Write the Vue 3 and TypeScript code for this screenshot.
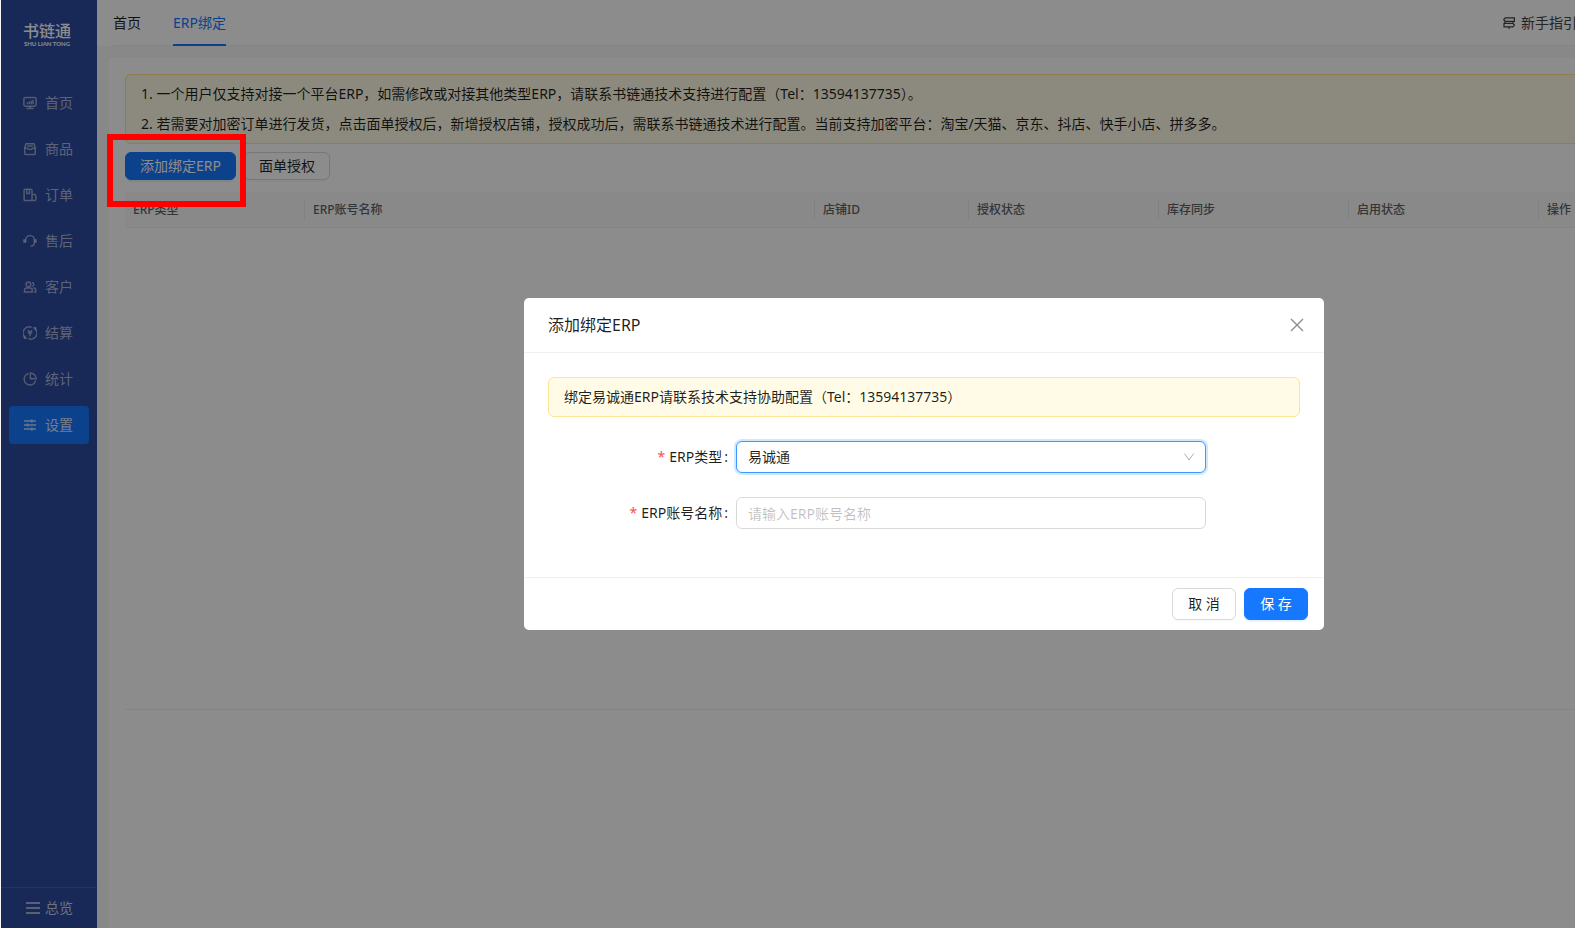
<script setup lang="ts">
import { ref } from 'vue'

interface MenuItem {
  key: string
  label: string
}

const menu: MenuItem[] = [
  { key: 'home', label: '首页' },
  { key: 'goods', label: '商品' },
  { key: 'order', label: '订单' },
  { key: 'service', label: '售后' },
  { key: 'customer', label: '客户' },
  { key: 'settle', label: '结算' },
  { key: 'stats', label: '统计' },
  { key: 'settings', label: '设置' },
]

const columns: { label: string; cls: string }[] = [
  { label: 'ERP类型', cls: 'w-type' },
  { label: 'ERP账号名称', cls: 'w-name' },
  { label: '店铺ID', cls: 'w-shop' },
  { label: '授权状态', cls: 'w-state' },
  { label: '库存同步', cls: 'w-state' },
  { label: '启用状态', cls: 'w-state' },
  { label: '操作', cls: 'w-action' },
]

const active = ref('settings')
const open = ref(true)
const erpType = ref('易诚通')
const account = ref('')
</script>

<template>
  <div class="app">
    <aside class="sidebar">
      <div class="logo">
        <span class="logo-name">书链通</span>
        <span class="logo-sub">SHU LIAN TONG</span>
      </div>
      <nav class="menu">
        <a
          v-for="item in menu"
          :key="item.key"
          href="#"
          class="menu-item"
          :class="{ active: item.key === active }"
          @click.prevent="active = item.key"
        >
          <svg class="icon" viewBox="0 0 14 14" fill="none" stroke="currentColor" stroke-width="1.5" aria-hidden="true">
            <template v-if="item.key === 'home'">
              <rect x="0.9" y="1.6" width="12.2" height="8.6" rx="1.4" />
              <path d="M7 10v2.4M3.4 12.6h7.2M4.4 8.200V6.2M6.300 8.200V5.4M8.200 8.200V4.8M10 8.200V3.8" />
            </template>
            <template v-else-if="item.key === 'goods'">
              <path d="M3 1.800h8l1.300 4.4v5.2a1 1 0 0 1-1 1H2.700a1 1 0 0 1-1-1V6.200z" />
              <path d="M1.900 6.200h2.600c.3 1.700 4.700 1.700 5 0h2.600M4.200 3.900h5.600" />
            </template>
            <template v-else-if="item.key === 'order'">
              <path d="M9 12.600H2a.9.9 0 0 1-.9-.9V2.200a.9.9 0 0 1 .9-.9h6.100a.9.9 0 0 1 .9.9v10.400zM9 6.600h2.700a1.200 1.200 0 0 1 1.200 1.200v3.600a1.200 1.200 0 0 1-1.200 1.200H9" />
              <path d="M3.800 1.500v4h2.700v-4" />
            </template>
            <template v-else-if="item.key === 'service'">
              <path d="M2.600 8.600V5.800a4.400 4.400 0 0 1 8.800 0v2.800c0 2.200-1.400 3.600-3.800 3.800" />
              <path d="M1.500 5.200v3.600M12.500 5.200v3.600" stroke-width="2.600" />
            </template>
            <template v-else-if="item.key === 'customer'">
              <circle cx="5.400" cy="4.400" r="2.300" />
              <path d="M1.500 12V10a2 2 0 0 1 2-2h3.700a2 2 0 0 1 2 2v2zM8.800 2.500a2 2 0 0 1 .6 3.900M10.200 8h.5a2 2 0 0 1 2 2v2h-2" />
            </template>
            <template v-else-if="item.key === 'settle'">
              <path d="M1.500 10.800A6 6 0 0 1 8.600 1.500M5.400 12.500a6 6 0 0 0 7.100-9.300" />
              <path d="M1 12.800v-3l3 2.400zM13 1.200v3l-3-2.400z" fill="currentColor" stroke-width="0.600" />
              <path d="M4.800 4.200L7 6.600l2.200-2.400M4.800 6.900h4.400M7 6.600v3.600" />
            </template>
            <template v-else-if="item.key === 'stats'">
              <path d="M5.700 1.500a5.800 5.800 0 1 0 6.900 7" />
              <path d="M7.400 1v5.800h5.700A5.800 5.800 0 0 0 7.400 1z" />
            </template>
            <template v-else>
              <path d="M1 3h12M1 7h12M1 11h12M8.800 1.500v3M4.600 5.500v3M8.800 9.500v3" />
            </template>
          </svg>
          <span>{{ item.label }}</span>
        </a>
      </nav>
      <button type="button" class="overview">
        <svg class="icon" viewBox="0 0 14 14" stroke="currentColor" stroke-width="1.4" aria-hidden="true">
          <path d="M0 2h14M0 7h14M0 12h14" />
        </svg>
        <span>总览</span>
      </button>
    </aside>

    <div class="main">
      <header class="topbar">
        <nav class="tabs">
          <a href="#" class="tab">首页</a>
          <a href="#" class="tab current">ERP绑定</a>
        </nav>
        <a href="#" class="guide">
          <svg class="guide-icon" viewBox="0 0 12 12" fill="none" stroke="currentColor" stroke-width="1.200" aria-hidden="true">
            <path d="M2.200.8h9.200v3.600H2.200L.7 2.600zM1 6.400h8.900l1.500 1.700-1.500 1.700H1zM2 4.400v2M10 4.400v2M6 9.800V12" />
          </svg>
          <span>新手指引</span>
        </a>
      </header>

      <main class="card">
        <div class="notice">
          <p>1. 一个用户仅支持对接一个平台ERP，如需修改或对接其他类型ERP，请联系书链通技术支持进行配置（Tel：13594137735）。</p>
          <p>2. 若需要对加密订单进行发货，点击面单授权后，新增授权店铺，授权成功后，需联系书链通技术进行配置。当前支持加密平台：淘宝/天猫、京东、抖店、快手小店、拼多多。</p>
        </div>
        <div class="toolbar">
          <div class="marked">
            <button type="button" class="btn small primary" @click="open = true">添加绑定ERP</button>
            <span class="marker"></span>
          </div>
          <button type="button" class="btn small">面单授权</button>
        </div>
        <div class="table-area">
          <table class="table">
            <thead>
              <tr>
                <th v-for="col in columns" :key="col.label" :class="col.cls" scope="col">
                  <span>{{ col.label }}</span>
                </th>
              </tr>
            </thead>
          </table>
        </div>
      </main>
    </div>

    <div v-if="open" class="mask">
      <section class="modal" role="dialog" aria-modal="true" aria-labelledby="modal-title">
        <div class="modal-head">
          <h2 id="modal-title">添加绑定ERP</h2>
          <button type="button" class="close" aria-label="关闭" @click="open = false">
            <svg viewBox="0 0 14 14" stroke="currentColor" stroke-width="1.400" aria-hidden="true">
              <path d="M1 1l12 12M13 1L1 13" />
            </svg>
          </button>
        </div>
        <form class="modal-body" @submit.prevent>
          <div class="tip">绑定易诚通ERP请联系技术支持协助配置（Tel：13594137735）</div>
          <div class="field">
            <label for="erp-type"><i>*</i>ERP类型<b>:</b></label>
            <div class="select-box">
              <select id="erp-type" v-model="erpType" class="control focused">
                <option>易诚通</option>
              </select>
              <svg class="arrow" viewBox="0 0 12 12" fill="none" stroke="currentColor" aria-hidden="true">
                <path d="M1.300 2.500L6 9l4.700-6.500" />
              </svg>
            </div>
          </div>
          <div class="field">
            <label for="erp-account"><i>*</i>ERP账号名称<b>:</b></label>
            <input id="erp-account" v-model="account" class="control" type="text" placeholder="请输入ERP账号名称" />
          </div>
        </form>
        <div class="modal-foot">
          <button type="button" class="btn" @click="open = false">取 消</button>
          <button type="button" class="btn primary">保 存</button>
        </div>
      </section>
    </div>
  </div>
</template>

<style>
body {
  margin: 0;
  overflow: hidden;
}
</style>

<style scoped>
* {
  box-sizing: border-box;
}

.app {
  display: flex;
  height: 100vh;
  padding-left: 1px;
  background: #f8f8f8;
  color: rgba(0, 0, 0, 0.88);
  font: 14px/22px "Noto Sans", "Noto Sans CJK SC", sans-serif;
}

button,
input,
select {
  font: inherit;
  color: inherit;
}

a {
  color: inherit;
  text-decoration: none;
}

.sidebar {
  display: flex;
  flex: none;
  flex-direction: column;
  width: 96px;
  background: #2c499f;
  color: rgba(255, 255, 255, 0.6);
}

.logo {
  display: flex;
  flex-direction: column;
  align-items: center;
  height: 84px;
  padding: 21px 4px 0 0;
  color: #fff;
}

.logo-name {
  font-size: 16px;
  font-weight: 500;
  line-height: 20px;
}

.logo-sub {
  font: 700 6px/6px Lato, sans-serif;
  white-space: nowrap;
}

.menu {
  display: flex;
  flex: 1;
  flex-direction: column;
  gap: 8px;
  padding: 0 8px;
}

.menu-item {
  display: flex;
  align-items: center;
  gap: 8px;
  height: 38px;
  padding-left: 14px;
  border-radius: 4px;
}

.menu-item.active {
  background: #1677ff;
  color: rgba(255, 255, 255, 0.85);
}

.icon {
  flex: none;
  width: 14px;
  height: 14px;
}

.menu-item .icon {
  opacity: 0.85;
}

.overview {
  display: flex;
  align-items: center;
  gap: 5px;
  height: 41px;
  padding: 0 0 0 25px;
  border: 0;
  border-top: 1px solid #4560ab;
  background: none;
  color: rgba(255, 255, 255, 0.75);
}

.main {
  display: flex;
  flex: 1;
  flex-direction: column;
  min-width: 0;
}

.topbar {
  display: flex;
  flex: none;
  justify-content: space-between;
  height: 46px;
  padding-left: 16px;
  background: linear-gradient(#f0f0f0, #f0f0f0) 16px 100% / 100% 1px no-repeat #fff;
}

.tabs {
  display: flex;
  gap: 32px;
}

.tab {
  padding-top: 12px;
  border-bottom: 2px solid transparent;
}

.tab.current {
  border-color: #1677ff;
  color: #1677ff;
}

.guide {
  display: flex;
  align-items: center;
  gap: 6px;
  margin-right: -2px;
  color: #444;
  white-space: nowrap;
}

.guide-icon {
  width: 12px;
  height: 12px;
}

.card {
  display: flex;
  flex: 1;
  flex-direction: column;
  margin: 12px 0 0 12px;
  padding: 16px 0 218px 16px;
  background: #fff;
}

.notice {
  padding: 4px 15px;
  border: 1px solid #ffe58f;
  border-right: 0;
  border-radius: 6px 0 0 6px;
  background: #fffbe6;
  line-height: 30px;
  white-space: nowrap;
}

.notice p {
  margin: 0;
}

.toolbar {
  display: flex;
  gap: 8px;
  padding: 8px 0 12px;
}

.marked {
  position: relative;
}

.marker {
  position: absolute;
  inset: -18px -10px -27px -18px;
  z-index: 20;
  border: 6px solid #f00;
  pointer-events: none;
}

.btn {
  min-width: 64px;
  height: 32px;
  padding: 0 14px;
  border: 1px solid #d9d9d9;
  border-radius: 6px;
  background: #fff;
  box-shadow: 0 2px 0 rgba(0, 0, 0, 0.02);
  line-height: 22px;
  white-space: nowrap;
}

.btn.small {
  display: block;
  height: 28px;
}

.btn.primary {
  border-color: #1677ff;
  background: #1677ff;
  box-shadow: 0 2px 0 rgba(5, 145, 255, 0.1);
  color: #fff;
}

.table-area {
  flex: 1;
  border-bottom: 1px solid #f0f0f0;
}

.table {
  width: 100%;
  border-collapse: separate;
  border-spacing: 0;
  table-layout: fixed;
}

.table th {
  height: 36px;
  padding: 0;
  border-bottom: 1px solid #f0f0f0;
  background: #fafafa;
  color: #606266;
  font-size: 12px;
  font-weight: 500;
  line-height: 20px;
  text-align: left;
}

.table th span {
  display: block;
  padding-left: 8px;
  border-right: 1px solid #ebebeb;
}

.table th:last-child span {
  border: 0;
}

.w-type {
  width: 180px;
}

.w-shop {
  width: 154px;
}

.w-state {
  width: 190px;
}

.w-action {
  width: 36px;
}

.mask {
  position: fixed;
  inset: 0 0 0 1px;
  z-index: 10;
  display: flex;
  align-items: center;
  justify-content: center;
  padding-left: 272px;
  background: rgba(0, 0, 0, 0.45);
}

.modal {
  width: 800px;
  border-radius: 5px;
  background: #fff;
}

.modal-head {
  display: flex;
  align-items: center;
  justify-content: space-between;
  height: 55px;
  padding: 0 16px 0 24px;
  border-bottom: 1px solid #f0f0f0;
}

.modal-head h2 {
  margin: 0;
  font-size: 16px;
  font-weight: 400;
  line-height: 24px;
}

.close {
  display: flex;
  padding: 4px;
  border: 0;
  background: none;
  color: rgba(0, 0, 0, 0.45);
}

.close svg {
  width: 14px;
  height: 14px;
}

.modal-body {
  display: flex;
  flex-direction: column;
  gap: 24px;
  padding: 24px 24px 48px;
}

.tip {
  padding: 8px 15px;
  border: 1px solid #ffe58f;
  border-radius: 6px;
  background: #fffbe6;
}

.field {
  display: grid;
  grid-template-columns: 25% 62.5%;
  align-items: center;
}

.field label {
  padding-right: 8px;
  text-align: right;
}

.field i {
  margin-right: 4px;
  color: #ff4d4f;
  font-style: normal;
}

.field b {
  margin-left: 2px;
  font-weight: 400;
}

.select-box {
  position: relative;
}

.control {
  display: block;
  width: 100%;
  height: 32px;
  padding: 0 11px;
  border: 1px solid #d9d9d9;
  border-radius: 6px;
  outline: 0;
  appearance: none;
  background: #fff;
}

.control::placeholder {
  color: rgba(0, 0, 0, 0.25);
  opacity: 1;
}

.control.focused {
  border-color: #4096ff;
  box-shadow: 0 0 0 2px rgba(5, 145, 255, 0.2);
}

.arrow {
  position: absolute;
  top: 10px;
  right: 11px;
  width: 12px;
  height: 12px;
  color: rgba(0, 0, 0, 0.3);
  pointer-events: none;
}

.modal-foot {
  display: flex;
  justify-content: flex-end;
  gap: 8px;
  padding: 10px 16px;
  border-top: 1px solid #f0f0f0;
}
</style>
